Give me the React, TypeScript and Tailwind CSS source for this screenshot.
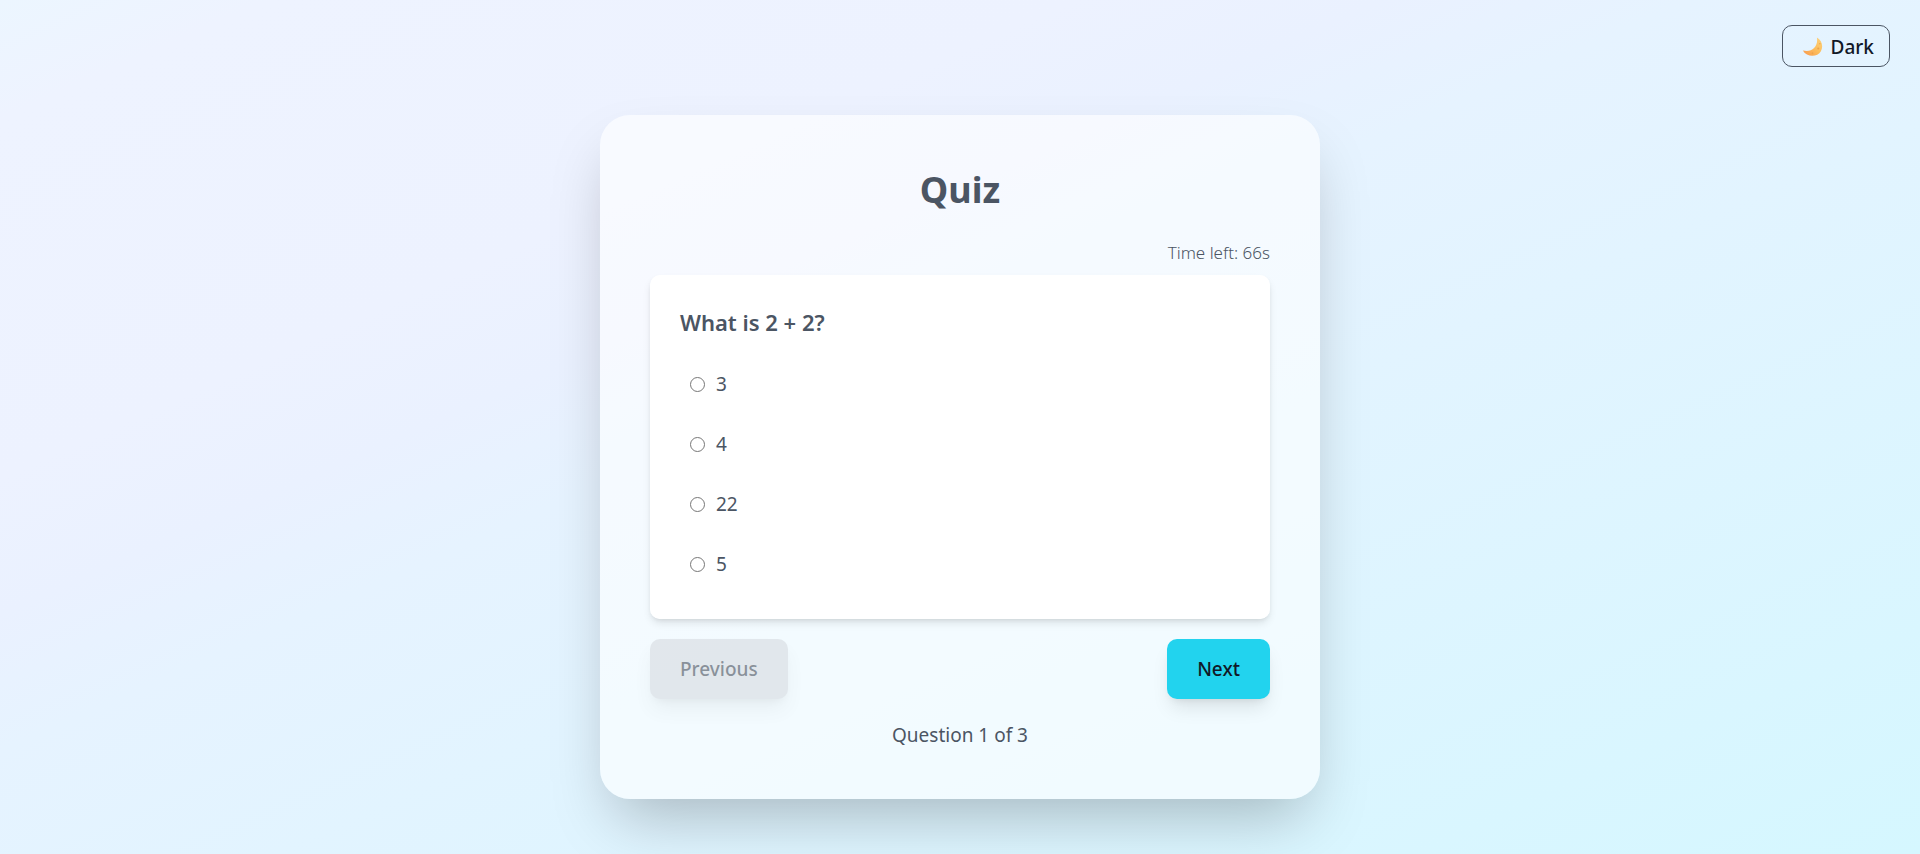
import { useState } from "react";

const options = ["3", "4", "22", "5"];

export default function App() {
  const [choice, setChoice] = useState<string | null>(null);

  return (
    <div className="flex min-h-screen flex-col items-center bg-[linear-gradient(to_bottom_right,#ecf6ff_0%,#eef3ff_7%,#edf2ff_28%,#eaf1ff_36%,#e6f3ff_44%,#d5f7ff_100%)] font-['Noto_Sans',sans-serif] text-[#4b5563]">
      <header className="flex w-full justify-end px-[30px] pt-[25px]">
        <button type="button" className="flex h-[42px] items-center gap-2 rounded-[10px] border border-[#4b5563] pt-[2px] pr-[15px] pl-[19px] text-[19px] font-medium text-[#111827]">
          <svg viewBox="0 0 20 20" className="size-[21px]" aria-hidden="true">
            <defs>
              <linearGradient id="moon" x1="0" y1="1" x2="1" y2="0">
                <stop offset="0" stopColor="#f9984e" />
                <stop offset="0.5" stopColor="#fcbd5c" />
                <stop offset="1" stopColor="#fcd480" />
              </linearGradient>
            </defs>
            <path d="M14.200 0.500C19 3 20.500 9 18 13.500C15 19 5 20 0.800 12.800C5 13.800 9 13.200 11.500 10.500C14.200 7.700 14.800 4 14.200 0.500Z" fill="url(#moon)" />
            <circle cx="15.500" cy="11" r="1" fill="#eda44c" />
            <circle cx="10" cy="15.500" r="0.900" fill="#eda44c" />
            <circle cx="17" cy="6.500" r="0.700" fill="#eda44c" />
          </svg>
          Dark
        </button>
      </header>
      <main className="mt-12 w-full max-w-[720px] rounded-[30px] bg-white/60 p-[50px] shadow-[0_31px_62px_-15px_rgba(0,0,0,0.25)]">
        <h1 className="text-center text-4xl leading-[50px] font-bold">Quiz</h1>
        <p className="mt-6 mb-2 text-right text-[17px] leading-7 font-light">Time left: 66s</p>
        <form>
          <fieldset className="rounded-[10px] bg-white px-[30px] pt-[30px] pb-[25px] shadow-[0_5px_8px_-1px_rgba(0,0,0,0.1),0_2px_5px_-2px_rgba(0,0,0,0.1)]">
            <legend className="float-left mb-[15px] w-full text-[22px] leading-[34px] font-semibold">What is 2 + 2?</legend>
            {options.map((o) => (
              <label key={o} className="flex h-[60px] w-full items-center gap-[11px] px-[10px] text-[19px]">
                <input type="radio" name="answer" value={o} checked={choice === o} onChange={() => setChoice(o)} className="size-[15px]" />
                {o}
              </label>
            ))}
          </fieldset>
          <div className="mt-5 flex justify-between">
            <button type="button" disabled className="h-[60px] rounded-[10px] bg-[#d1d5db] px-[30px] text-[19px] font-medium text-[#1f2937] opacity-50 shadow-[0_12px_19px_-4px_rgba(0,0,0,0.1),0_5px_8px_-5px_rgba(0,0,0,0.1)]">Previous</button>
            <button type="button" className="h-[60px] rounded-[10px] bg-[#22d3ee] px-[30px] text-[19px] font-medium text-[#111827] shadow-[0_12px_19px_-4px_rgba(0,0,0,0.1),0_5px_8px_-5px_rgba(0,0,0,0.1)]">Next</button>
          </div>
        </form>
        <p className="mt-[22px] text-center text-[19px] leading-7">Question 1 of 3</p>
      </main>
    </div>
  );
}
